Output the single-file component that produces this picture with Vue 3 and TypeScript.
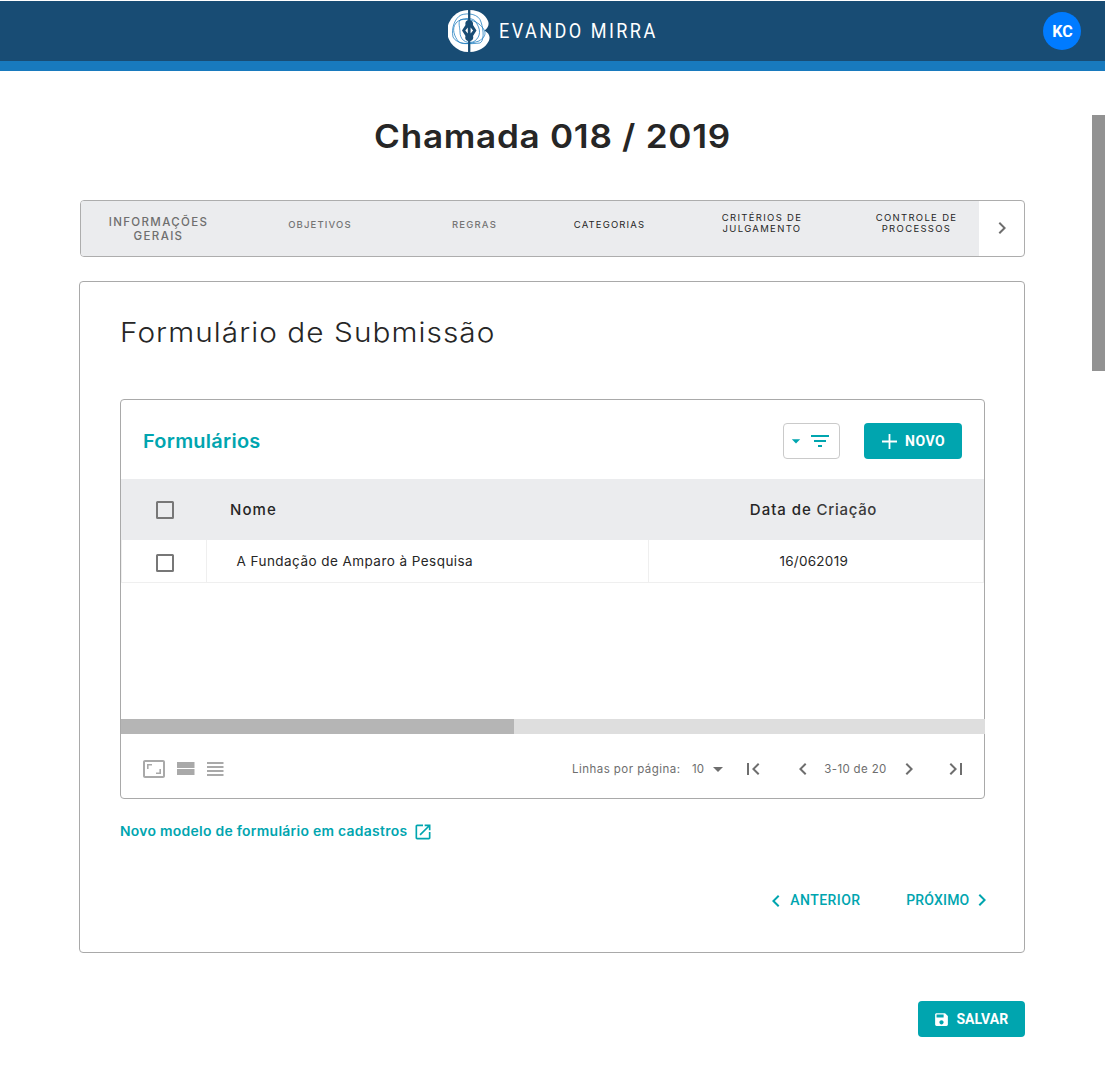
<script setup lang="ts">
interface Tab {
  lines: string[]
  kind: 'current' | 'done' | 'next'
  width: number
}

interface FormRow {
  id: number
  name: string
  created: string
}

const tabs: Tab[] = [
  { lines: ['INFORMAÇÕES', 'GERAIS'], kind: 'current', width: 154 },
  { lines: ['OBJETIVOS'], kind: 'done', width: 169 },
  { lines: ['REGRAS'], kind: 'done', width: 140 },
  { lines: ['CATEGORIAS'], kind: 'next', width: 130 },
  { lines: ['CRITÉRIOS DE', 'JULGAMENTO'], kind: 'next', width: 175 },
  { lines: ['CONTROLE DE', 'PROCESSOS'], kind: 'next', width: 130 },
]

const rows: FormRow[] = [
  { id: 1, name: 'A Fundação de Amparo à Pesquisa', created: '16/062019' },
]
</script>

<template>
  <div class="page">
    <header class="topbar">
      <div class="brand">
        <svg class="brand-mark" viewBox="0 0 42 42" width="42" height="42">
          <path fill="#fff" d="M20.2 0A21 21 0 0 0 20.2 42Z" />
          <path fill="#fff" d="M22.2 0C31 .3 37 4.500 39.800 10.500C41.500 14 40.500 17.500 36.500 20.500C41.500 23.500 42.500 27 40.800 31C37.500 37.500 31 41.700 22.200 42Z" />
          <g fill="none" stroke="#187abe" stroke-width=".75">
            <path d="M13 5C20 2.500 31 4 33 12C36 21 36 31 32 33C22 34 9 35 5 27C3 18 7 8 13 5Z" />
            <path d="M8 13C13 7 24 9 31 14C39 21 39 26 31 31C22 34 13 35 10 31C7 27 3 19 8 13Z" />
            <path d="M12 10C17 8 27 7 29 14C34 22 31 29 25 32C17 34 12 29 12 22C12 18 10 13 12 10Z" />
          </g>
          <path fill="#184c74" d="M20.200 0h2v42h-2zM21 10C24 10 25.500 12.500 25 15L28.500 20.500L25 26C26 29 24 31 21.200 31C18.500 31 16.500 29 17.500 26L14 20.500L17.500 15C17 12.500 18 10 21 10Z" />
          <path fill="#fff" d="M19.800 17.500v6l-2.500-3zM22.600 17.500v6l2.500-3z" />
        </svg>
        <span class="brand-name">EVANDO MIRRA</span>
      </div>
      <div class="avatar">KC</div>
    </header>

    <main class="content">
      <h1>Chamada 018 / 2019</h1>

      <nav class="tabs">
        <a
          v-for="tab in tabs"
          :key="tab.lines[0]"
          class="tab"
          :class="[tab.kind, { double: tab.lines.length > 1 }]"
          :style="{ width: tab.width + 'px' }"
        >
          <span v-for="line in tab.lines" :key="line">{{ line }}</span>
        </a>
        <button class="tabs-next" aria-label="Avançar">
          <svg class="icon" viewBox="0 0 24 24"><path d="M10 6 8.590 7.410 13.170 12l-4.580 4.590L10 18l6-6z" /></svg>
        </button>
      </nav>

      <section class="card">
        <h2>Formulário de Submissão</h2>

        <div class="panel">
          <div class="panel-head">
            <h3>Formulários</h3>
            <button class="filter" aria-label="Filtrar">
              <svg class="caret" viewBox="0 0 24 24"><path d="m7 10 5 5 5-5z" /></svg>
              <svg class="icon" viewBox="0 0 24 24"><path d="M10 18h4v-2h-4zM3 6v2h18V6zm3 7h12v-2H6z" /></svg>
            </button>
            <button class="btn new">
              <svg class="plus" viewBox="0 0 15 15"><path d="M7.500 0v15M0 7.500h15" stroke="#fff" stroke-width="1.800" /></svg>
              <span>NOVO</span>
            </button>
          </div>

          <div class="grid-row grid-head">
            <div class="cell check"><i class="box"></i></div>
            <div class="cell name">Nome</div>
            <div class="cell date"><span class="dark">Data de</span> Criação</div>
          </div>
          <div v-for="row in rows" :key="row.id" class="grid-row grid-body">
            <div class="cell check"><i class="box"></i></div>
            <div class="cell name">{{ row.name }}</div>
            <div class="cell date">{{ row.created }}</div>
          </div>

          <div class="spacer"></div>
          <div class="hscroll"><div class="hthumb"></div></div>

          <div class="panel-foot">
            <div class="density">
              <svg class="icon" viewBox="0 0 24 24"><path d="M19 12h-1.600v3.400H14V17h5zM6.600 8.600H10V7H5v5h1.600zM21 3H3c-1.100 0-2 .9-2 2v14c0 1.100.9 2 2 2h18c1.100 0 2-.9 2-2V5c0-1.100-.9-2-2-2zm0 16H3V5h18z" /></svg>
              <svg class="icon stream" viewBox="0 0 24 24"><path d="M4 18h17.500v-6H4zM4 5v6h17.500V5z" /></svg>
              <svg class="icon lines" viewBox="0 0 24 24"><path d="M4 15h16.500v-2H4zm0 4h16.500v-2H4zm0-8h16.500V9H4zm0-6v2h16.500V5z" /></svg>
            </div>
            <span class="per-page">Linhas por página:</span>
            <span class="size">10</span>
            <svg class="icon drop" viewBox="0 0 24 24"><path d="m7 10 5 5 5-5z" /></svg>
            <svg class="icon first" viewBox="0 0 24 24"><path d="M18.410 16.590 13.820 12l4.590-4.590L17 6l-6 6 6 6zM6 6h2v12H6z" /></svg>
            <svg class="icon prev" viewBox="0 0 24 24"><path d="M15.410 7.410 14 6l-6 6 6 6 1.410-1.410L10.830 12z" /></svg>
            <span class="range">3-10 de 20</span>
            <svg class="icon next-page" viewBox="0 0 24 24"><path d="M10 6 8.590 7.410 13.170 12l-4.580 4.590L10 18l6-6z" /></svg>
            <svg class="icon last" viewBox="0 0 24 24"><path d="M5.590 7.410 10.180 12l-4.590 4.590L7 18l6-6-6-6zM16 6h2v12h-2z" /></svg>
          </div>
        </div>

        <a class="template-link">
          <span>Novo modelo de formulário em cadastros</span>
          <svg viewBox="0 0 24 24"><path d="M19 19H5V5h7V3H5c-1.110 0-2 .9-2 2v14c0 1.100.89 2 2 2h14c1.100 0 2-.9 2-2v-7h-2zM14 3v2h3.590l-9.830 9.830 1.410 1.410L19 6.410V10h2V3z" /></svg>
        </a>

        <div class="steps">
          <a class="step back">
            <svg class="icon" viewBox="0 0 24 24"><path d="M15.410 7.410 14 6l-6 6 6 6 1.410-1.410L10.830 12z" /></svg>
            <span>ANTERIOR</span>
          </a>
          <a class="step forward">
            <span>PRÓXIMO</span>
            <svg class="icon" viewBox="0 0 24 24"><path d="M10 6 8.590 7.410 13.170 12l-4.580 4.590L10 18l6-6z" /></svg>
          </a>
        </div>
      </section>

      <button class="btn save">
        <svg viewBox="0 0 24 24"><path fill="#fff" d="M17 3H5c-1.110 0-2 .9-2 2v14c0 1.100.89 2 2 2h14c1.100 0 2-.9 2-2V7zm-5 16c-1.660 0-3-1.340-3-3s1.340-3 3-3 3 1.340 3 3-1.340 3-3 3zm3-10H5V5h10z" /></svg>
        <span>SALVAR</span>
      </button>
    </main>

    <div class="page-thumb"></div>
  </div>
</template>

<style>
body {
  background: #fff;
}
</style>

<style scoped>
.page {
  position: relative;
  width: 1105px;
  height: 1086px;
  overflow: hidden;
  color: #262626;
  font-family: Inter, 'Liberation Sans', sans-serif;
  white-space: nowrap;
}
.page *,
.page {
  box-sizing: border-box;
}
button {
  font: inherit;
  padding: 0;
  margin: 0;
  border: 0;
  background: none;
}
svg {
  display: block;
  flex: none;
}
.icon {
  width: 24px;
  height: 24px;
  fill: currentColor;
}

.topbar {
  display: flex;
  align-items: center;
  margin-top: 1px;
  height: 70px;
  padding: 0 24px 0 448px;
  background: #184c74;
  border-bottom: 10px solid #187abe;
}
.brand {
  display: flex;
  align-items: center;
  flex: 1;
}
.brand-name {
  margin-left: 8.500px;
  color: #fff;
  font: 400 21px/30px Roboto, sans-serif;
  letter-spacing: 2.850px;
  transform: scaleX(0.86);
  transform-origin: left;
}
.avatar {
  width: 38px;
  height: 38px;
  border-radius: 50%;
  background: #007bff;
  color: #fff;
  font: 700 16px/39px Roboto, sans-serif;
  text-align: center;
  padding-left: 1px;
}

.content {
  padding: 0 80px 0 79px;
}
h1 {
  margin: 41px 0 0 1px;
  font-size: 33px;
  line-height: 48px;
  font-weight: 600;
  letter-spacing: 0.680px;
  text-align: center;
  transform: scaleX(1.063);
}
.tabs {
  display: flex;
  margin: 40px 0 0 1px;
  height: 57px;
  width: 945px;
  border: 1px solid #adadad;
  border-radius: 4px;
  overflow: hidden;
}
.tab {
  display: flex;
  flex: none;
  flex-direction: column;
  align-items: center;
  justify-content: center;
  background: #ebecee;
  font-size: 9.500px;
  line-height: 11px;
  font-weight: 400;
  letter-spacing: 1.320px;
  padding: 0 0 8px 1px;
}
.tab.double {
  padding-bottom: 11px;
}
.tab:nth-child(4) {
  letter-spacing: 1.150px;
}
.tab:nth-child(6) {
  padding-left: 5px;
}
.tab.done {
  color: #757575;
  font-weight: 500;
  letter-spacing: 1.150px;
}
.tab.current {
  color: #6f6f6f;
  font-size: 11.500px;
  line-height: 14px;
  font-weight: 500;
  letter-spacing: 1.350px;
  padding: 1px 0 0 1px;
}
.tabs-next {
  display: flex;
  flex: 1;
  align-items: center;
  justify-content: center;
  padding-bottom: 1px;
  color: #6e6e6e;
}

.card {
  margin-top: 24px;
  width: 946px;
  height: 672px;
  padding: 30px 40px 0;
  border: 1px solid #a9a9a9;
  border-radius: 4px;
}
h2 {
  margin: 0 0 0 -0.5px;
  font-size: 27.500px;
  line-height: 40px;
  font-weight: 300;
  letter-spacing: 0.980px;
  transform: scaleX(1.082);
  transform-origin: left;
}
.panel {
  margin-top: 47px;
  width: 865px;
  height: 400px;
  border: 1px solid #a9a9a9;
  border-radius: 4px;
}
.panel-head {
  display: flex;
  height: 79px;
  padding: 23px 22px 0 22px;
}
h3 {
  flex: 1;
  margin: 1px 0 0;
  color: #00a5af;
  font-size: 19px;
  line-height: 36px;
  font-weight: 600;
  letter-spacing: 0.250px;
  transform: scaleX(1.05);
  transform-origin: left;
}
.filter {
  display: flex;
  align-items: center;
  width: 57px;
  height: 36px;
  margin-right: 24px;
  padding-left: 2px;
  border: 1px solid #cacaca;
  border-radius: 4px;
  color: #00a5af;
}
.caret {
  width: 20px;
  height: 20px;
  margin-right: 1.500px;
  fill: currentColor;
}
.btn {
  display: flex;
  align-items: center;
  height: 36px;
  border-radius: 4px;
  background: #00a5af;
  color: #fff;
  font: 700 14px/36px Roboto, sans-serif;
}
.new {
  width: 98px;
  padding-left: 18px;
  letter-spacing: 0.5px;
}
.plus {
  width: 15px;
  height: 15px;
  margin-right: 8px;
}

.grid-row {
  display: flex;
  width: 863px;
}
.cell {
  display: flex;
  align-items: center;
}
.check {
  width: 86px;
  padding-left: 35px;
}
.box {
  width: 18px;
  height: 18px;
  border: 2px solid #777;
  border-radius: 1.500px;
}
.name {
  width: 442px;
}
.date {
  flex: 1;
  justify-content: center;
  white-space: pre;
}
.grid-head {
  height: 61px;
  background: #ebecee;
  color: #3a3a3a;
  font-size: 15px;
  font-weight: 500;
  letter-spacing: 0.700px;
}
.grid-head .name {
  color: #262626;
  padding-left: 23px;
  letter-spacing: 1.050px;
}
.grid-head .date {
  padding-right: 6px;
}
.dark {
  color: #262626;
  letter-spacing: 0.980px;
}
.grid-body {
  height: 43px;
  border: solid #efefef;
  border-width: 0 1px 1px;
  font-size: 13.500px;
  letter-spacing: 0.450px;
}
.grid-body .cell {
  border-right: 1px solid #efefef;
}
.grid-body .check {
  width: 85px;
  padding: 3px 0 0 34px;
}
.grid-body .name {
  padding-left: 29.500px;
}
.grid-body .date {
  border-right: 0;
  padding-right: 4.500px;
  letter-spacing: 0.270px;
}
.spacer {
  height: 136px;
}
.hscroll {
  height: 15px;
  width: 864px;
  background: #dedede;
}
.hthumb {
  width: 393px;
  height: 15px;
  background: #b5b5b5;
}
.panel-foot {
  display: flex;
  align-items: center;
  height: 64px;
  padding: 6px 0 0 20.500px;
  color: #6e6e6e;
  font-size: 11.500px;
}
.density {
  display: flex;
  flex: none;
  width: 430.500px;
  color: #a9a9a9;
}
.stream {
  margin-left: 7.500px;
}
.lines {
  margin-left: 6px;
}
.per-page {
  width: 120px;
  letter-spacing: 0.460px;
}
.size {
  width: 14px;
  letter-spacing: 0.1px;
}
.drop {
  margin-right: 11px;
}
.prev {
  margin-left: 26.300px;
}
.range {
  width: 82px;
  padding-left: 9px;
  letter-spacing: 0.350px;
}
.last {
  margin-left: 23px;
}

.template-link {
  display: flex;
  align-items: center;
  height: 20px;
  margin-top: 22px;
  color: #00a5af;
  font-size: 13px;
  font-weight: 600;
  letter-spacing: 0.260px;
}
.template-link span {
  width: 288px;
  transform: scaleX(1.07);
  transform-origin: left;
}
.template-link svg {
  width: 20px;
  height: 20px;
  margin: 1px 0 0 5px;
  fill: currentColor;
}
.steps {
  display: flex;
  height: 24px;
  margin-top: 47px;
  padding-left: 643.700px;
  color: #00a5af;
  font: 500 14px/24px Roboto, sans-serif;
}
.step {
  display: flex;
  flex: none;
}
.back {
  width: 142.500px;
  letter-spacing: 0.470px;
}
.back span {
  margin-left: 2.500px;
}
.back .icon {
  margin-top: 1px;
}
.forward {
  letter-spacing: 0.180px;
}
.forward .icon {
  margin-left: 1px;
}
.save {
  width: 107px;
  margin: 48px 0 0 839.400px;
  padding-left: 14.500px;
  letter-spacing: 0.1px;
}
.save svg {
  width: 17px;
  height: 17px;
  margin-right: 6.500px;
}
.page-thumb {
  position: absolute;
  top: 115px;
  right: 0;
  width: 13px;
  height: 256px;
  background: #929292;
}
</style>
